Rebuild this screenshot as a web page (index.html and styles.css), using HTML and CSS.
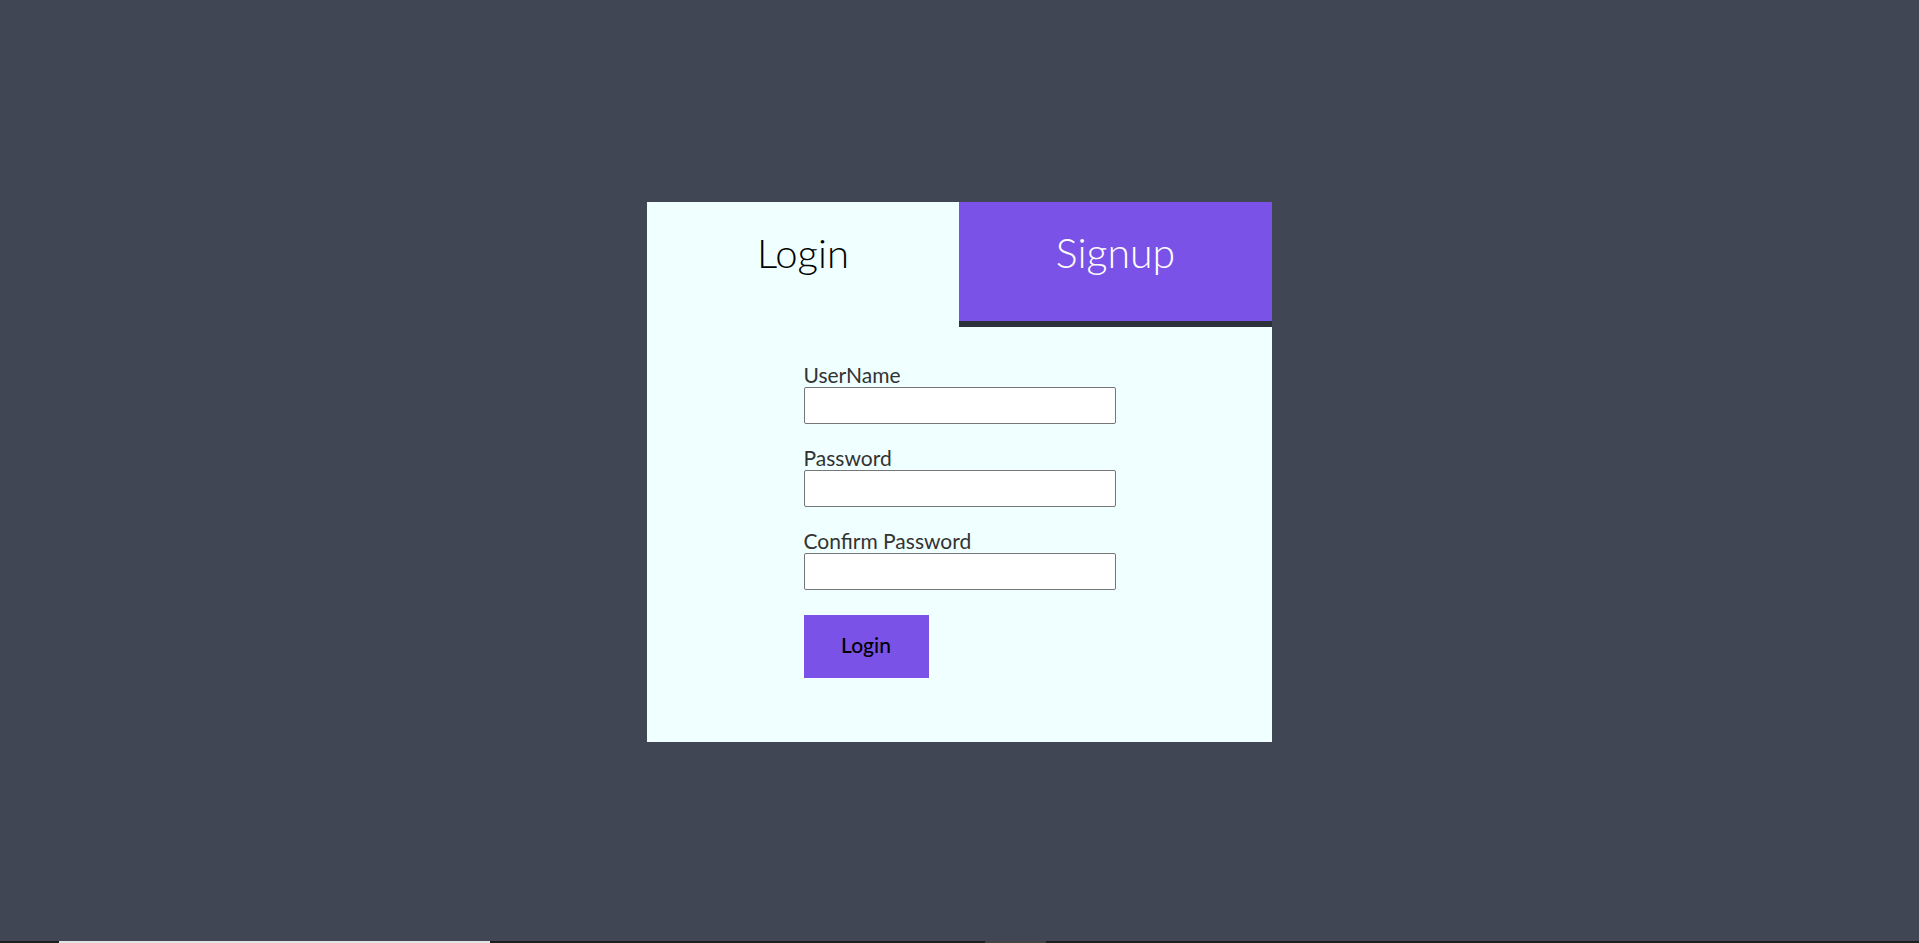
FILE: index.html
```html
<!DOCTYPE html>
<html lang="en">
<head>
<meta charset="utf-8">
<title>Login</title>
<link rel="stylesheet" href="styles.css">
</head>
<body>
<main class="stage">
  <section class="card">
    <div class="tabs">
      <div class="tab tab-active">Login</div>
      <div class="tab tab-other">Signup</div>
    </div>
    <form class="form">
      <label class="label" for="user">UserName</label>
      <input class="input" id="user" type="text">
      <label class="label" for="pass">Password</label>
      <input class="input" id="pass" type="password">
      <label class="label" for="confirm">Confirm Password</label>
      <input class="input" id="confirm" type="password">
      <button class="btn" type="button">Login</button>
    </form>
  </section>
</main>
<div class="taskbar">
  <span class="tb-seg tb-dark tb-a"></span>
  <span class="tb-seg tb-light tb-b"></span>
  <span class="tb-seg tb-dark tb-c"></span>
  <span class="tb-seg tb-gray tb-d"></span>
  <span class="tb-seg tb-dark tb-e"></span>
</div>
</body>
</html>
```
FILE: styles.css
```css
* { box-sizing: border-box; }
html, body { margin: 0; padding: 0; }
body {
  background: #404653;
  height: 943px;
  display: flex;
  flex-direction: column;
  font-family: "Lato", "Open Sans", sans-serif;
  overflow: hidden;
}
.stage {
  flex: 1;
  display: flex;
  justify-content: center;
  align-items: flex-start;
  padding-top: 202px;
}
.card {
  width: 625px;
  height: 540px;
  background: #f0ffff;
  display: flex;
  flex-direction: column;
}
.tabs {
  display: grid;
  grid-template-columns: 312px 313px;
  align-items: start;
}
.tab {
  height: 119px;
  text-align: center;
  font-size: 40px;
  font-weight: 300;
  line-height: 48px;
  padding-top: 27px;
}
.tab-active { color: #000; }
.tab-other {
  background: #7b52e8;
  color: #fff;
  height: 125px;
  border-bottom: 6px solid #2b313b;
  font-size: 41px;
}
.form {
  width: 312px;
  margin: 36px auto 0;
  display: flex;
  flex-direction: column;
  align-items: flex-start;
}
.label {
  font-size: 21px;
  line-height: 24px;
  color: #333;
}
.input {
  width: 312px;
  height: 37px;
  border: 1px solid #767676;
  border-radius: 2px;
  background: #fff;
  margin: 0 0 22px;
  font-size: 16px;
}
.input:last-of-type { margin-bottom: 25px; }
.btn {
  width: 125px;
  height: 63px;
  background: #7b52e8;
  border: none;
  color: #000;
  font-family: inherit;
  font-size: 21px;
  font-weight: 500;
  padding: 0 0 5px;
}
.taskbar {
  height: 2px;
  display: flex;
  flex: none;
}
.tb-seg { height: 2px; display: block; }
.tb-dark { background: #1f1f1f; }
.tb-light { background: #e4e4e4; }
.tb-gray { background: #444; }
.tb-a { width: 59px; }
.tb-b { width: 431px; }
.tb-c { width: 495px; }
.tb-d { width: 61px; }
.tb-e { flex: 1; }
```
